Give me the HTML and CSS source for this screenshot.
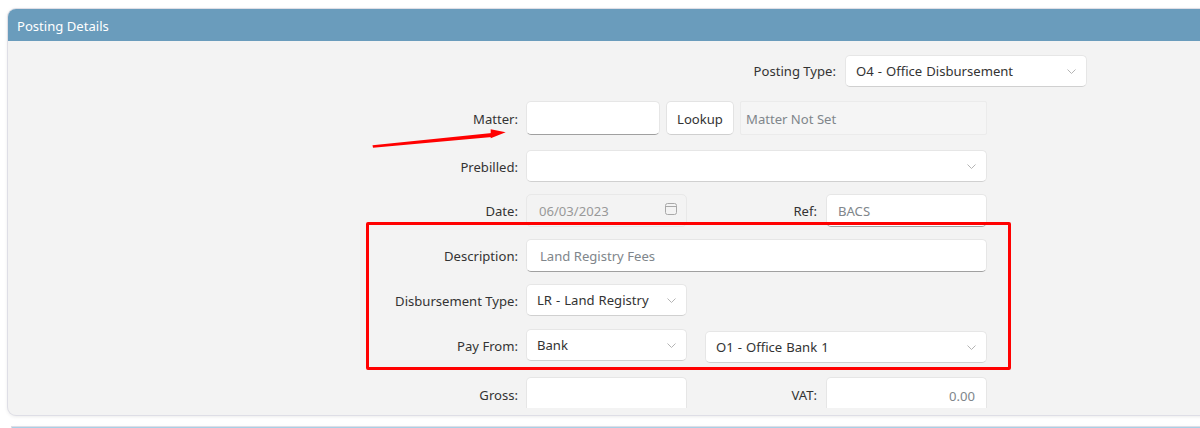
FILE: index.html
```html
<!DOCTYPE html>
<html lang="en">
<head>
<meta charset="utf-8">
<title>Posting Details</title>
<link rel="stylesheet" href="styles.css">
</head>
<body>
<section class="panel">
  <header class="panel-head">Posting Details</header>
  <div class="panel-body">
    <form class="form">
      <div class="row gap-14">
        <label class="lbl lbl-wide">Posting Type:</label>
        <div class="field sel w-242 h-32"><span>O4 - Office Disbursement</span><svg class="chev" viewBox="0 0 9 5"><path d="M.5.5l4 4 4-4"/></svg></div>
      </div>
      <div class="row gap-15">
        <label class="lbl lbl-low">Matter:</label>
        <div class="field input w-134 h-34"></div>
        <button class="btn" type="button">Lookup</button>
        <div class="field readonly">Matter Not Set</div>
      </div>
      <div class="row gap-12">
        <label class="lbl">Prebilled:</label>
        <div class="field sel w-461 h-32"><span></span><svg class="chev" viewBox="0 0 9 5"><path d="M.5.5l4 4 4-4"/></svg></div>
      </div>
      <div class="row gap-12">
        <label class="lbl">Date:</label>
        <div class="field disabled w-161 h-33"><span>06/03/2023</span><svg class="cal" viewBox="0 0 12 12"><rect x=".5" y=".5" width="11" height="11" rx="2"/><path d="M.5 3.5h11"/></svg></div>
        <label class="lbl lbl-mid">Ref:</label>
        <div class="field input muted w-161 h-33 pad-11">BACS</div>
      </div>
      <div class="row gap-12">
        <label class="lbl">Description:</label>
        <div class="field input muted w-461 h-33 pad-13">Land Registry Fees</div>
      </div>
      <div class="row gap-13">
        <label class="lbl">Disbursement Type:</label>
        <div class="field sel w-161 h-32"><span>LR - Land Registry</span><svg class="chev" viewBox="0 0 9 5"><path d="M.5.5l4 4 4-4"/></svg></div>
      </div>
      <div class="row gap-14">
        <label class="lbl">Pay From:</label>
        <div class="field sel w-161 h-32"><span>Bank</span><svg class="chev" viewBox="0 0 9 5"><path d="M.5.5l4 4 4-4"/></svg></div>
        <div class="field sel w-282 h-32 second"><span>O1 - Office Bank 1</span><svg class="chev" viewBox="0 0 9 5"><path d="M.5.5l4 4 4-4"/></svg></div>
      </div>
      <div class="row">
        <label class="lbl lbl-low">Gross:</label>
        <div class="field plain w-161 h-36"></div>
        <label class="lbl lbl-mid lbl-low">VAT:</label>
        <div class="field plain muted right w-161 h-36">0.00</div>
      </div>
    </form>
  </div>
</section>
<section class="panel next"><header class="panel-head"></header></section>

<div class="callout"></div>
<svg class="arrow" viewBox="0 0 140 24" aria-hidden="true"><path class="head" d="M.5 20.2L120 8L120 12L1 22.8Z"/><path class="head" d="M118.7 4.3L133.7 7.3L118.7 13.3Z"/></svg>
</body>
</html>
```
FILE: styles.css
```css
html, body { margin: 0; height: 100%; overflow: hidden; background: #fff; }
body { font-family: "Noto Sans", "Open Sans", sans-serif; font-size: 13.1px; color: #333; }

.panel {
  margin: 9px -30px 0 8px;
  border-radius: 8px;
  background: #f3f3f3;
  box-shadow: 0 0 0 1px #dedee6, 0 1px 4px rgba(0, 0, 0, .12);
}
.panel.next { margin: 12px -30px 0 12px; background: #a9cfe6; border-radius: 0; }
.panel-head {
  height: 32px;
  line-height: 34px;
  padding-left: 9px;
  background: #6a9cbc;
  color: #fff;
  border-radius: 8px 8px 0 0;
}
.next .panel-head { height: 1px; background: #a9cfe6; border-radius: 0; }
.panel-body { padding-bottom: 7px; }
.form { height: 353px; padding-top: 14px; overflow: hidden; }

.row { display: flex; align-items: flex-start; }
.gap-12 { margin-bottom: 12px; }
.gap-13 { margin-bottom: 13px; }
.gap-14 { margin-bottom: 14px; }
.gap-15 { margin-bottom: 15px; }

.lbl { width: 510px; margin-right: 8px; flex: none; text-align: right; line-height: 34px; height: 32px; }
.lbl-wide { width: 828px; margin-right: 9px; line-height: 32px; }
.lbl-mid { width: 130px; margin-right: 9px; }
.lbl-low { line-height: 36px; }

.field {
  box-sizing: border-box;
  display: flex;
  align-items: center;
  flex: none;
  padding: 0 10px;
  border: 1px solid #e6e6e6;
  border-radius: 5px;
  background: #fff;
}
.w-134 { width: 134px; }
.w-161 { width: 161px; }
.w-242 { width: 242px; }
.w-282 { width: 282px; }
.w-461 { width: 461px; }
.h-32 { height: 32px; }
.h-33 { height: 33px; }
.h-34 { height: 34px; }
.h-36 { height: 36px; }
.pad-11 { padding-left: 11px; }
.pad-13 { padding-left: 13px; }

.sel { justify-content: space-between; border-bottom-color: #d0d0d0; word-spacing: .6px; }
.input { border-bottom-color: #a0a0a0; }
.muted { color: #80868b; }
.plain { border-bottom: 0; }
.right { justify-content: flex-end; padding-right: 11px; }
.second { margin: 2px 0 0 18px; }

.readonly {
  width: 247px;
  height: 34px;
  margin-left: 6px;
  padding: 2px 0 0 5px;
  border-color: #ebebeb;
  border-radius: 2px;
  background: #f5f5f5;
  color: #80868b;
}
.disabled {
  justify-content: space-between;
  padding: 0 9px 0 12px;
  border-color: #e8e8e8;
  background: #f3f3f3;
  color: #999;
}

.btn {
  box-sizing: border-box;
  width: 68px;
  height: 34px;
  margin-left: 6px;
  padding: 2px 0 0;
  border: 1px solid #e3e3e3;
  border-bottom-color: #cfcfcf;
  border-radius: 5px;
  background: #fff;
  font: inherit;
  color: #333;
}

.chev { width: 9px; height: 5px; fill: none; stroke: #b4b4b4; stroke-width: 1; flex: none; }
.cal { width: 12px; height: 12px; margin-top: -4px; fill: none; stroke: #a8a8a8; stroke-width: 1; flex: none; }

.callout {
  position: absolute;
  left: 366px;
  top: 222px;
  box-sizing: border-box;
  width: 645px;
  height: 148px;
  border: 3px solid #f00;
  border-radius: 2px;
}
.arrow { position: absolute; left: 372px; top: 125px; width: 140px; height: 24px; }
.head { fill: #f00; }
```
